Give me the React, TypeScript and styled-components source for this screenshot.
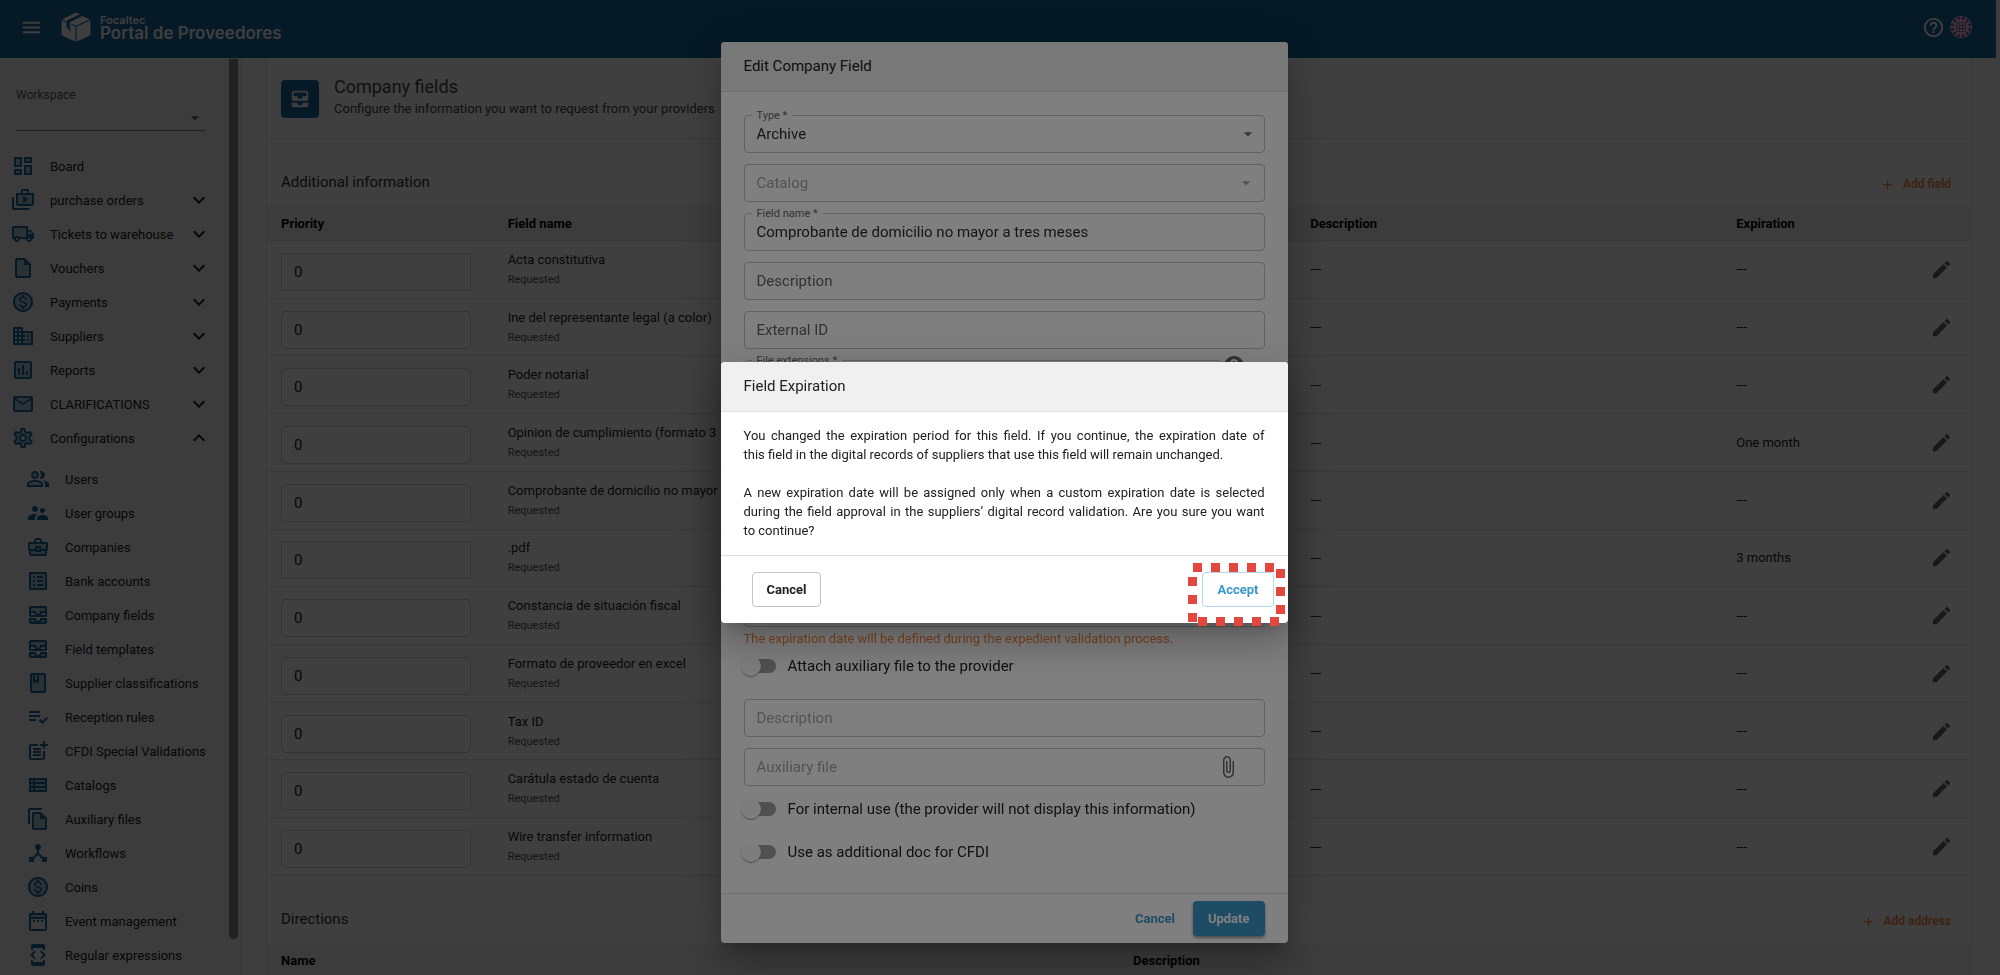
import React from "react";
import styled, { createGlobalStyle } from "styled-components";
import type { IconType } from "react-icons";
import {
  MdAdd,
  MdAllInbox,
  MdArrowDropDown,
  MdAttachFile,
  MdDeveloperMode,
  MdDeviceHub,
  MdEdit,
  MdExpandLess,
  MdExpandMore,
  MdHelp,
  MdHelpOutline,
  MdMenu,
  MdOutlineAllInbox,
  MdOutlineAssessment,
  MdOutlineBook,
  MdOutlineBusiness,
  MdOutlineBusinessCenter,
  MdOutlineDashboard,
  MdOutlineDateRange,
  MdOutlineEmail,
  MdOutlineFileCopy,
  MdOutlineInsertDriveFile,
  MdOutlineListAlt,
  MdOutlineLocalShipping,
  MdOutlineMonetizationOn,
  MdOutlinePeopleAlt,
  MdOutlinePostAdd,
  MdOutlineSettings,
  MdOutlineShopTwo,
  MdOutlineViewList,
  MdPlaylistAddCheck,
  MdSupervisorAccount,
} from "react-icons/md";

const navy = "#14669a";
const blue = "#3c98c8";
const orange = "#f5853f";

const GlobalStyle = createGlobalStyle`
  * { box-sizing: border-box; }
  body {
    margin: 0;
    overflow: hidden;
    background: #fafafa;
    color: #212121;
    font-family: Roboto, "Liberation Sans", sans-serif;
    font-size: 13px;
  }
  button, input, select { font: inherit; color: inherit; }
  h1, h2, p { margin: 0; font-weight: 400; }
`;

const Page = styled.div`
  display: flex;
  flex-direction: column;
  height: 100vh;
  overflow: hidden;
`;

const TopBar = styled.header`
  flex: none;
  display: flex;
  align-items: center;
  height: 58px;
  margin-right: 4px;
  padding: 0 24px 4px 20px;
  background: ${navy};
  color: #fafafa;
`;

const IconButton = styled.button`
  display: inline-flex;
  padding: 0;
  border: 0;
  background: none;
  cursor: pointer;
`;

const Brand = styled.a`
  display: flex;
  align-items: center;
  gap: 9px;
  margin: 0 auto 0 18px;
  color: inherit;
  text-decoration: none;
  font-family: Inter, sans-serif;
  font-weight: 600;
`;

const BrandText = styled.span`
  display: flex;
  flex-direction: column;
  font-size: 17px;
  line-height: 14px;
`;

const BrandOwner = styled.span`
  font-size: 11px;
  line-height: 12px;
`;

const Avatar = styled.svg`
  margin-left: 5px;
`;

const Shell = styled.div`
  flex: 1;
  display: flex;
  min-height: 0;
`;

const Sidebar = styled.aside`
  flex: none;
  display: flex;
  gap: 1px;
  width: 242px;
  background: #f2f2f2;
  border-right: 1px solid #e0e0e0;
`;

const SidebarContent = styled.div`
  width: 228px;
  overflow: hidden;
`;

const ScrollThumb = styled.div`
  width: 9px;
  height: calc(100% - 37px);
  margin-top: 1px;
  border-radius: 0 0 5px 5px;
  background: #868686;
`;

const Workspace = styled.label`
  display: flex;
  flex-direction: column;
  gap: 9px;
  margin: 29px 22px 18px 16px;
  color: #555;
  font-size: 12px;
  line-height: 16px;
`;

const SelectWrap = styled.span`
  position: relative;
  display: block;
`;

const Arrow = styled(MdArrowDropDown)<{ $right: number; $top?: number; $muted?: boolean }>`
  position: absolute;
  right: ${(p) => p.$right}px;
  top: ${(p) => p.$top ?? 9}px;
  color: ${(p) => (p.$muted ? "#a6a6a6" : "#666")};
  pointer-events: none;
`;

const WorkspaceSelect = styled.select`
  appearance: none;
  display: block;
  width: 100%;
  height: 19px;
  border: 0;
  border-bottom: 1px solid #868686;
  border-radius: 0;
  background: none;
`;

const Menu = styled.ul<{ $nested?: boolean }>`
  margin: 0;
  padding: ${(p) => (p.$nested ? "7px 0 0 15px" : "0")};
  list-style: none;
`;

const MenuLink = styled.a`
  display: flex;
  align-items: center;
  height: 34px;
  padding: 0 17px 0 11px;
  color: inherit;
  text-decoration: none;
  white-space: nowrap;
`;

const MenuText = styled.span`
  flex: 1;
  margin-left: 15px;
`;

const IconTint = styled.svg`
  flex: none;
  color: ${navy};
`;

const Main = styled.main`
  flex: 1;
  min-width: 0;
  padding: 0 28px 0 24px;
  overflow: hidden;
`;

const Card = styled.section`
  background: #fff;
  border: 1px solid #e6e6e6;
  border-top: 0;
`;

const CardHeader = styled.header`
  display: flex;
  align-items: center;
  gap: 15px;
  height: 81px;
  padding: 1px 14px 0;
  border-bottom: 1px solid #e6e6e6;
`;

const CardHeading = styled.div`
  padding-bottom: 3px;
`;

const CardIcon = styled.span`
  display: inline-flex;
  padding: 8px;
  border-radius: 4px;
  background: ${navy};
  color: #fafafa;
`;

const CardTitle = styled.h1`
  font-size: 18px;
  line-height: 24px;
  color: #444;
`;

const CardSubtitle = styled.p`
  line-height: 20px;
  color: #444;
`;

const SectionBar = styled.div`
  display: flex;
  align-items: center;
  justify-content: space-between;
  height: 67px;
  padding: 19px 20px 0 14px;
`;

const SectionTitle = styled.h2`
  font-size: 15px;
  color: #333;
`;

const AddButton = styled.button`
  display: inline-flex;
  align-items: center;
  gap: 8px;
  padding: 4px 0 0;
  border: 0;
  background: none;
  color: ${orange};
  font-size: 12px;
  font-weight: 600;
`;

const Table = styled.table<{ $height?: number }>`
  width: 100%;
  height: ${(p) => (p.$height ? p.$height + "px" : "auto")};
  table-layout: fixed;
  border-collapse: separate;
  border-spacing: 0;
`;

const Th = styled.th<{ $width?: string }>`
  width: ${(p) => p.$width || "auto"};
  height: 35px;
  padding: 0 14px;
  border-bottom: 1px solid #e4e4e4;
  background: #f2f2f2;
  color: #000;
  font-weight: 700;
  text-align: left;
`;

const Td = styled.td`
  padding: 0 14px;
  border-bottom: 1px solid #e4e4e4;
  line-height: 20px;
`;

const Status = styled.div`
  color: #555;
  font-size: 11px;
  line-height: 19px;
`;

const PriorityInput = styled.input`
  display: block;
  width: 190px;
  height: 38px;
  margin-top: 5px;
  padding: 0 12px;
  border: 1px solid #ccc;
  border-radius: 4px;
  background: none;
  font-size: 15px;
`;

const EditButton = styled(IconButton)`
  float: right;
  margin-right: 4px;
  color: #666;
`;

const Backdrop = styled.div`
  position: fixed;
  inset: 0;
  display: flex;
  align-items: center;
  justify-content: center;
  padding: 10px 0 0 8px;
  background: rgba(0, 0, 0, 0.5);
`;

const Dialog = styled.div`
  width: 567px;
  border-radius: 4px;
  background: #fff;
  box-shadow: 0 11px 15px -7px rgba(0, 0, 0, 0.2), 0 24px 38px 3px rgba(0, 0, 0, 0.14),
    0 9px 46px 8px rgba(0, 0, 0, 0.12);
`;

const DialogTitle = styled.h2`
  height: 50px;
  padding: 0 23px;
  border-bottom: 1px solid #e0e0e0;
  border-radius: 4px 4px 0 0;
  background: #f0f0f0;
  font-size: 15px;
  line-height: 48px;
`;

const Form = styled.form`
  display: flex;
  flex-direction: column;
  gap: 11px;
  padding: 23px 23px 29px;
`;

const FieldBox = styled.div<{ $disabled?: boolean }>`
  position: relative;
  flex: 1;
  color: ${(p) => (p.$disabled ? "#a6a6a6" : "#2a2a2a")};
`;

const FieldLabel = styled.label`
  position: absolute;
  top: -7px;
  left: 8px;
  padding: 0 5px;
  background: #fff;
  color: #666;
  font-size: 11px;
  line-height: 16px;
`;

const controlStyle = `
  appearance: none;
  display: block;
  width: 100%;
  height: 38px;
  padding: 0 12px;
  border: 1px solid #c4c4c4;
  border-radius: 4px;
  background: none;
  font-size: 15px;
  outline: 0;
  opacity: 1;
`;

const TextControl = styled.input`
  ${controlStyle}
  &::placeholder { color: #666; opacity: 1; }
  &:disabled::placeholder { color: #a6a6a6; }
`;

const SelectControl = styled.select`
  ${controlStyle}
`;

const ClipIcon = styled(MdAttachFile)`
  position: absolute;
  right: 25px;
  top: 7px;
  color: #666;
`;

const FieldRow = styled.div`
  display: flex;
  color: #666;
`;

const InfoButton = styled(IconButton)`
  width: 43px;
  height: 24px;
  margin-top: -6px;
`;

const ExpirationGroup = styled.div`
  margin-top: 180px;
`;

const Hint = styled.p`
  margin: 4px 0 7px;
  color: ${orange};
  line-height: 16px;
`;

const SwitchRow = styled.label<{ $gap?: number }>`
  display: flex;
  align-items: center;
  gap: 12px;
  height: 24px;
  margin-bottom: ${(p) => p.$gap || 0}px;
  font-size: 15px;
`;

const SwitchInput = styled.input`
  appearance: none;
  display: flex;
  align-items: center;
  width: 32px;
  height: 14px;
  margin: 0;
  border-radius: 7px;
  background: #a0a0a0;

  &::before {
    content: "";
    flex: none;
    width: 20px;
    height: 20px;
    margin-left: -3px;
    border-radius: 50%;
    background: #fafafa;
    box-shadow: 0 2px 1px -1px rgba(0, 0, 0, 0.2), 0 1px 1px rgba(0, 0, 0, 0.14),
      0 1px 3px rgba(0, 0, 0, 0.12);
  }
`;

const DialogActions = styled.footer<{ $spread?: boolean }>`
  display: flex;
  align-items: center;
  justify-content: ${(p) => (p.$spread ? "space-between" : "flex-end")};
  gap: 3px;
  height: ${(p) => (p.$spread ? 68 : 50)}px;
  padding: ${(p) => (p.$spread ? "0 14px 0 31px" : "0 23px")};
  border-top: 1px solid #e0e0e0;
`;

const Button = styled.button<{ $kind: "text" | "filled" | "outline" | "outlineBlue" }>`
  height: 35px;
  padding: 0 14px;
  border-radius: 4px;
  border: 1px solid
    ${(p) => (p.$kind === "outline" ? "#c4c4c4" : p.$kind === "outlineBlue" ? "#b4d8eb" : "transparent")};
  background: ${(p) => (p.$kind === "filled" ? blue : "transparent")};
  color: ${(p) => (p.$kind === "filled" ? "#fff" : p.$kind === "outline" ? "#212121" : blue)};
  box-shadow: ${(p) => (p.$kind === "filled" ? "0 2px 3px rgba(0, 0, 0, 0.4)" : "none")};
  font-weight: 700;
`;

const Message = styled.div`
  display: flex;
  flex-direction: column;
  gap: 19px;
  padding: 14px 23px 15px;
  line-height: 19px;
  text-align: justify;
`;

const Highlighted = styled.span`
  position: relative;
  display: inline-flex;
`;

const Marker = styled.svg`
  position: absolute;
  right: -11px;
  top: -9px;
  pointer-events: none;
`;

interface Glyph {
  icon: IconType;
  tint?: string;
}

/* Outline icon with its body lightly tinted, as in the two-tone icon set. */
function TwoTone({ icon: Outline, tint }: Glyph) {
  return (
    <IconTint width="24" height="24" viewBox="0 0 24 24" fill="currentColor" aria-hidden="true">
      {tint && <path d={tint} opacity="0.3" />}
      <Outline size={24} />
    </IconTint>
  );
}

interface Entry extends Glyph {
  label: string;
}

const coin = "M12 3a9 9 0 1 0 0 18a9 9 0 0 0 0-18z";
const inbox = "M5 5h14v4h-4l-3 2l-3-2H5zM5 16h4l3 2l3-2h4v3H5z";

const sections: Entry[] = [
  { label: "Board", icon: MdOutlineDashboard, tint: "M5 5h4v6H5zM15 5h4v2h-4zM15 13h4v6h-4zM5 17h4v2H5z" },
  { label: "purchase orders", icon: MdOutlineShopTwo, tint: "M7 7h14v9H7z" },
  { label: "Tickets to warehouse", icon: MdOutlineLocalShipping, tint: "M3 6h12v9H3zM17 9h3l2 4h-5z" },
  { label: "Vouchers", icon: MdOutlineInsertDriveFile, tint: "M6 4h7v5h5v11H6z" },
  { label: "Payments", icon: MdOutlineMonetizationOn, tint: coin },
  { label: "Suppliers", icon: MdOutlineBusiness, tint: "M12 9h8v10h-8z" },
  { label: "Reports", icon: MdOutlineAssessment, tint: "M5 5h14v14H5z" },
  { label: "CLARIFICATIONS", icon: MdOutlineEmail, tint: "M4 6h16v12H4z" },
  {
    label: "Configurations",
    icon: MdOutlineSettings,
    tint: "M12 5a7 7 0 1 0 0 14a7 7 0 0 0 0-14zM12 8.500a3.500 3.500 0 1 1 0 7a3.500 3.500 0 0 1 0-7z",
  },
];

const settings: Entry[] = [
  { label: "Users", icon: MdOutlinePeopleAlt, tint: "M4 18h10c0-3-10-3-10 0zM9 6a2 2 0 1 0 0 4a2 2 0 0 0 0-4z" },
  { label: "User groups", icon: MdSupervisorAccount },
  { label: "Companies", icon: MdOutlineBusinessCenter, tint: "M4 9h16v10H4z" },
  { label: "Bank accounts", icon: MdOutlineListAlt, tint: "M5 5h14v14H5z" },
  { label: "Company fields", icon: MdOutlineAllInbox, tint: inbox },
  { label: "Field templates", icon: MdOutlineAllInbox, tint: inbox },
  { label: "Supplier classifications", icon: MdOutlineBook, tint: "M6 4h12v16H6z" },
  { label: "Reception rules", icon: MdPlaylistAddCheck },
  { label: "CFDI Special Validations", icon: MdOutlinePostAdd },
  { label: "Catalogs", icon: MdOutlineViewList, tint: "M3 5h18v14H3z" },
  { label: "Auxiliary files", icon: MdOutlineFileCopy, tint: "M8 7h6v5h5v9H8z" },
  { label: "Workflows", icon: MdDeviceHub },
  { label: "Coins", icon: MdOutlineMonetizationOn, tint: coin },
  { label: "Event management", icon: MdOutlineDateRange, tint: "M5 6h14v2H5z" },
  { label: "Regular expressions", icon: MdDeveloperMode },
];

const fields: [string, string][] = [
  ["Acta constitutiva", "---"],
  ["Ine del representante legal (a color)", "---"],
  ["Poder notarial", "---"],
  ["Opinion de cumplimiento (formato 3", "One month"],
  ["Comprobante de domicilio no mayor", "---"],
  [".pdf", "3 months"],
  ["Constancia de situación fiscal", "---"],
  ["Formato de proveedor en excel", "---"],
  ["Tax ID", "---"],
  ["Carátula estado de cuenta", "---"],
  ["Wire transfer information", "---"],
];

function Logo() {
  return (
    <svg width="30" height="30" viewBox="0 0 30 30" fill="currentColor" aria-hidden="true">
      <path d="M15 0.500L19 2.300L6.500 8L5.800 8.700V14.500L8.800 17V10.300L21.200 4L29 7.300L15 13.800L10 11.500L9.500 17.800L5.500 14.800V9.500L1.200 7.300z" />
      <path d="M0.500 8.300L5.200 10.500V15.600L10 19.500V12.600L14.500 14.800V29.500L2 24Q0.500 23.300 0.500 21.500z" />
      <path d="M15.500 14.800L29.500 8.300V21.500Q29.500 23.300 28 24L15.500 29.500z" />
    </svg>
  );
}

function Identicon() {
  const spots: [number, number][] = [];
  for (let i = 0; i < 12; i++) {
    const a = ((i + 0.5) * Math.PI) / 6;
    spots.push([11 + 9 * Math.cos(a), 11 + 9 * Math.sin(a)]);
  }
  return (
    <Avatar width="22" height="22" viewBox="0 0 22 22" role="img" aria-label="Account">
      <circle cx="11" cy="11" r="11" fill="#dccce0" />
      {spots.map(([x, y], i) => (
        <circle key={i} cx={x} cy={y} r="1.500" fill="#9b35a8" />
      ))}
      <path
        d="M6.500 6.500h9v9h-9zM9.500 6v10M12.500 6v10M6 9.500h10M6 12.500h10"
        fill="none"
        stroke="#a070b0"
        strokeWidth="1"
      />
    </Avatar>
  );
}

function MenuItems({ entries, nested }: { entries: Entry[]; nested?: boolean }) {
  return (
    <Menu $nested={nested}>
      {entries.map((e, i) => {
        const open = e.label === "Configurations";
        const Chevron = open ? MdExpandLess : MdExpandMore;
        return (
          <li key={e.label}>
            <MenuLink href="#">
              <TwoTone icon={e.icon} tint={e.tint} />
              <MenuText>{e.label}</MenuText>
              {!nested && i > 0 && <Chevron size={24} />}
            </MenuLink>
            {open && <MenuItems entries={settings} nested />}
          </li>
        );
      })}
    </Menu>
  );
}

const markerSquares: [number, number][] = [
  ...[5, 23, 41, 59, 77].map((x) => [x, 0] as [number, number]),
  ...[14, 32, 50].map((y) => [0, y] as [number, number]),
  ...[6, 24, 42].map((y) => [88, y] as [number, number]),
  ...[10, 28, 46, 64, 82].map((x) => [x, 54] as [number, number]),
];

export default function App() {
  return (
    <>
      <GlobalStyle />
      <Page>
        <TopBar>
          <IconButton aria-label="Menu">
            <MdMenu size={23} />
          </IconButton>
          <Brand href="#">
            <Logo />
            <BrandText>
              <BrandOwner>Focaltec</BrandOwner>
              Portal de Proveedores
            </BrandText>
          </Brand>
          <IconButton aria-label="Help">
            <MdHelpOutline size={23} />
          </IconButton>
          <Identicon />
        </TopBar>
        <Shell>
          <Sidebar>
            <SidebarContent>
              <Workspace>
                Workspace
                <SelectWrap>
                  <WorkspaceSelect />
                  <Arrow size={20} $right={1} $top={-4} />
                </SelectWrap>
              </Workspace>
              <nav>
                <MenuItems entries={sections} />
              </nav>
            </SidebarContent>
            <ScrollThumb />
          </Sidebar>
          <Main>
            <Card>
              <CardHeader>
                <CardIcon>
                  <MdAllInbox size={22} />
                </CardIcon>
                <CardHeading>
                  <CardTitle>Company fields</CardTitle>
                  <CardSubtitle>Configure the information you want to request from your providers</CardSubtitle>
                </CardHeading>
              </CardHeader>
              <SectionBar>
                <SectionTitle>Additional information</SectionTitle>
                <AddButton>
                  <MdAdd size={15} />
                  Add field
                </AddButton>
              </SectionBar>
              <Table $height={670}>
                <thead>
                  <tr>
                    <Th $width="13.3%">Priority</Th>
                    <Th $width="47.1%">Field name</Th>
                    <Th $width="25%">Description</Th>
                    <Th>Expiration</Th>
                    <Th $width="60px" aria-label="Actions" />
                  </tr>
                </thead>
                <tbody>
                  {fields.map(([name, expiration]) => (
                    <tr key={name}>
                      <Td>
                        <PriorityInput defaultValue="0" aria-label={"Priority of " + name} />
                      </Td>
                      <Td>
                        {name}
                        <Status>Requested</Status>
                      </Td>
                      <Td>---</Td>
                      <Td>{expiration}</Td>
                      <Td>
                        <EditButton aria-label={"Edit " + name}>
                          <MdEdit size={23} />
                        </EditButton>
                      </Td>
                    </tr>
                  ))}
                </tbody>
              </Table>
              <SectionBar>
                <SectionTitle>Directions</SectionTitle>
                <AddButton>
                  <MdAdd size={15} />
                  Add address
                </AddButton>
              </SectionBar>
              <Table>
                <thead>
                  <tr>
                    <Th $width="50%">Name</Th>
                    <Th>Description</Th>
                  </tr>
                </thead>
              </Table>
            </Card>
          </Main>
        </Shell>
      </Page>

      <Backdrop>
        <Dialog role="dialog" aria-labelledby="edit-title">
          <DialogTitle id="edit-title">Edit Company Field</DialogTitle>
          <Form id="edit-form">
            <FieldBox>
              <SelectControl id="type">
                <option>Archive</option>
              </SelectControl>
              <FieldLabel htmlFor="type">Type *</FieldLabel>
              <Arrow size={20} $right={7} />
            </FieldBox>
            <FieldBox $disabled>
              <SelectControl disabled aria-label="Catalog">
                <option>Catalog</option>
              </SelectControl>
              <Arrow size={20} $right={9} $muted />
            </FieldBox>
            <FieldBox>
              <TextControl id="name" defaultValue="Comprobante de domicilio no mayor a tres meses" />
              <FieldLabel htmlFor="name">Field name *</FieldLabel>
            </FieldBox>
            <FieldBox>
              <TextControl placeholder="Description" aria-label="Description" />
            </FieldBox>
            <FieldBox>
              <TextControl placeholder="External ID" aria-label="External ID" />
            </FieldBox>
            <FieldRow>
              <FieldBox>
                <SelectControl id="extensions" />
                <FieldLabel htmlFor="extensions">File extensions *</FieldLabel>
              </FieldBox>
              <InfoButton type="button" aria-label="About file extensions">
                <MdHelp size={24} />
              </InfoButton>
            </FieldRow>
            <ExpirationGroup>
              <SelectControl aria-label="Expiration" />
              <Hint>The expiration date will be defined during the expedient validation process.</Hint>
              <SwitchRow $gap={10}>
                <SwitchInput type="checkbox" role="switch" />
                Attach auxiliary file to the provider
              </SwitchRow>
            </ExpirationGroup>
            <FieldBox>
              <TextControl placeholder="Description" aria-label="Auxiliary description" disabled />
            </FieldBox>
            <FieldBox>
              <TextControl placeholder="Auxiliary file" aria-label="Auxiliary file" disabled />
              <ClipIcon size={24} />
            </FieldBox>
            <SwitchRow $gap={8}>
              <SwitchInput type="checkbox" role="switch" />
              For internal use (the provider will not display this information)
            </SwitchRow>
            <SwitchRow>
              <SwitchInput type="checkbox" role="switch" />
              Use as additional doc for CFDI
            </SwitchRow>
          </Form>
          <DialogActions>
            <Button $kind="text">Cancel</Button>
            <Button $kind="filled">Update</Button>
          </DialogActions>
        </Dialog>
      </Backdrop>

      <Backdrop>
        <Dialog role="alertdialog" aria-labelledby="confirm-title">
          <DialogTitle id="confirm-title">Field Expiration</DialogTitle>
          <Message>
            <p>
              You changed the expiration period for this field. If you continue, the expiration date of this&nbsp;field
              in the digital records of suppliers that use this field will remain unchanged.
            </p>
            <p>
              A new expiration date will be assigned only when a custom expiration date is selected during the field
              approval in the suppliers’ digital record validation. Are you sure you want to&nbsp;continue?
            </p>
          </Message>
          <DialogActions $spread>
            <Button $kind="outline">Cancel</Button>
            <Highlighted>
              <Button $kind="outlineBlue">Accept</Button>
              <Marker width="97" height="63" viewBox="0 0 97 63" fill="#e2483d" aria-hidden="true">
                {markerSquares.map(([x, y]) => (
                  <rect key={x + "-" + y} x={x} y={y} width="9" height="9" />
                ))}
              </Marker>
            </Highlighted>
          </DialogActions>
        </Dialog>
      </Backdrop>
    </>
  );
}
